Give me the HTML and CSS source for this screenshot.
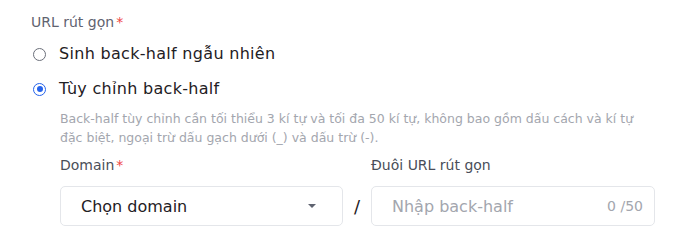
FILE: index.html
```html
<!DOCTYPE html>
<html>
<head>
  <title>URL rút gọn</title>
  <link rel="stylesheet" href="styles.css">
</head>
<body>
  <div class="form">
    <div class="field-label">URL rút gọn<span class="required">*</span></div>
    <div class="radio-group">
      <label class="radio">
        <span class="radio-dot"></span>
        <span>Sinh back-half ngẫu nhiên</span>
      </label>
      <label class="radio checked">
        <span class="radio-dot"></span>
        <span>Tùy chỉnh back-half</span>
      </label>
    </div>
    <div class="custom">
      <p class="hint">Back-half tùy chỉnh cần tối thiểu 3 kí tự và tối đa 50 kí tự, không bao gồm dấu cách và kí tự đặc biệt, ngoại trừ dấu gạch dưới (_) và dấu trừ (-).</p>
      <div class="url-row">
        <div class="col">
          <div class="sub-label">Domain<span class="required">*</span></div>
          <div class="select">
            <span>Chọn domain</span>
            <span class="caret"></span>
          </div>
        </div>
        <div class="slash">/</div>
        <div class="col">
          <div class="sub-label">Đuôi URL rút gọn</div>
          <div class="input">
            <span class="placeholder">Nhập back-half</span>
            <span class="counter">0 /50</span>
          </div>
        </div>
      </div>
    </div>
  </div>
</body>
</html>
```

FILE: styles.css
```css
body {
  margin: 0;
  background: #ffffff;
  font-family: "DejaVu Sans", sans-serif;
  color: #1f2024;
}

.form {
  padding: 12px 0 0 31px;
}

.field-label {
  font-size: 14px;
  line-height: 20px;
  color: #5f6370;
}

.required {
  color: #ef4444;
  margin-left: 2px;
}

.radio-group {
  display: flex;
  flex-direction: column;
  gap: 13px;
  margin-top: 11px;
}

.radio {
  display: flex;
  align-items: center;
  gap: 13px;
  font-size: 16px;
  line-height: 22px;
  letter-spacing: 0.3px;
  color: #1f2024;
}

.radio-dot {
  width: 11px;
  height: 11px;
  border: 1.5px solid #6b6f7a;
  border-radius: 50%;
  position: relative;
  margin-left: 2px;
}

.radio.checked .radio-dot {
  border-color: #2563eb;
}

.radio.checked .radio-dot::after {
  content: "";
  position: absolute;
  top: 2.5px;
  left: 2.5px;
  width: 6px;
  height: 6px;
  border-radius: 50%;
  background: #2563eb;
}

.custom {
  padding-left: 29px;
  width: 595px;
}

.hint {
  margin: 9px 0 0;
  font-size: 12.5px;
  line-height: 19px;
  color: #a3a6ae;
}

.url-row {
  display: grid;
  grid-template-columns: 283px 28px 284px;
  align-items: end;
  margin-top: 8px;
}

.sub-label {
  font-size: 14px;
  font-weight: 500;
  line-height: 20px;
  color: #4a4e59;
  margin-bottom: 11px;
}

.select,
.input {
  height: 40px;
  box-sizing: border-box;
  border: 1px solid #e4e6ea;
  border-radius: 5px;
  display: flex;
  align-items: center;
  justify-content: space-between;
  padding: 0 11px 0 20px;
  font-size: 16px;
}

.caret {
  width: 0;
  height: 0;
  border-left: 4.5px solid transparent;
  border-right: 4.5px solid transparent;
  border-top: 4.5px solid #5f6370;
  margin-right: 15px;
}

.slash {
  height: 40px;
  display: flex;
  align-items: center;
  justify-content: center;
  font-size: 18px;
  color: #1f2024;
}

.placeholder {
  color: #a3a6ae;
}

.counter {
  font-size: 14px;
  color: #a3a6ae;
}
```
